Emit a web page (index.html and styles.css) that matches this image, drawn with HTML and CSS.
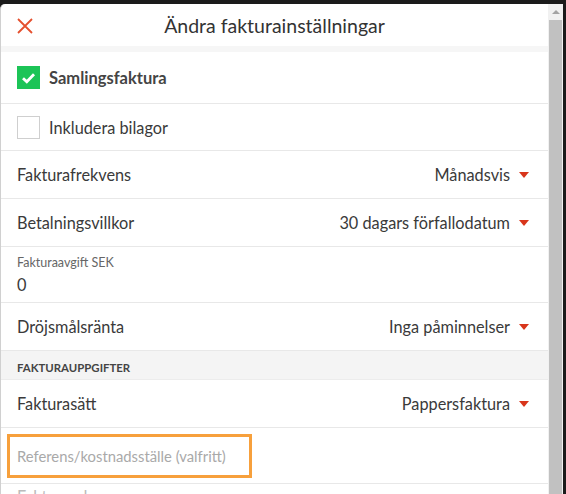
FILE: index.html
```html
<!DOCTYPE html>
<html>
  <head>
    <title>Ändra fakturainställningar</title>
    <link rel="stylesheet" href="styles.css">
  </head>
  <body>
    <div class="frame">
      <div class="modal">
        <div class="modal-header">
          <svg class="close-icon" width="18" height="18" viewBox="0 0 18 18">
            <path d="M2 2 L16 16 M16 2 L2 16" stroke="#e5502e" stroke-width="1.8" fill="none"/>
          </svg>
          <div class="modal-title">Ändra fakturainställningar</div>
        </div>
        <div class="band"></div>

        <div class="row check-row first">
          <span class="checkbox checked">
            <svg width="15" height="12" viewBox="0 0 15 12">
              <path d="M2 6.2 L5.8 9.8 L13 2.2" stroke="#fff" stroke-width="2.8" fill="none"/>
            </svg>
          </span>
          <span class="check-label bold">Samlingsfaktura</span>
        </div>
        <div class="row check-row">
          <span class="checkbox"></span>
          <span class="check-label">Inkludera bilagor</span>
        </div>

        <div class="row">
          <span class="label">Fakturafrekvens</span>
          <span class="select">Månadsvis<span class="caret"></span></span>
        </div>
        <div class="row">
          <span class="label">Betalningsvillkor</span>
          <span class="select">30 dagars förfallodatum<span class="caret"></span></span>
        </div>
        <div class="row field-row">
          <span class="small-label">Fakturaavgift SEK</span>
          <span class="field-value">0</span>
        </div>
        <div class="row">
          <span class="label">Dröjsmålsränta</span>
          <span class="select">Inga påminnelser<span class="caret"></span></span>
        </div>

        <div class="section-title">FAKTURAUPPGIFTER</div>

        <div class="row">
          <span class="label">Fakturasätt</span>
          <span class="select">Pappersfaktura<span class="caret"></span></span>
        </div>
        <div class="row input-row">
          <div class="text-input">Referens/kostnadsställe (valfritt)</div>
        </div>
        <div class="row last-row">
          <span class="label faded">Fakturaadress</span>
        </div>
      </div>
      <div class="scrollbar">
        <div class="scroll-arrow"></div>
        <div class="scroll-thumb"></div>
      </div>
    </div>
  </body>
</html>
```

FILE: styles.css
```css
body {
  margin: 0;
  background-color: #1b1b1b;
  font-family: Lato, "Open Sans", sans-serif;
  color: #3a3a3a;
  overflow: hidden;
}
.frame {
  display: flex;
  margin-top: 4px;
  margin-right: 3px;
  height: 490px;
  overflow: hidden;
}
.modal {
  flex: 1;
  background-color: #fff;
  border-left: 1px solid #d0d0d0;
  border-top-left-radius: 5px;
  overflow: hidden;
}
.modal-header {
  position: relative;
  height: 42px;
  display: flex;
  align-items: center;
  justify-content: center;
}
.close-icon {
  position: absolute;
  left: 15px;
  top: 13px;
}
.modal-title {
  font-size: 19.5px;
  color: #333;
}
.band {
  height: 6px;
  background-color: #f6f6f6;
}
.row {
  display: flex;
  align-items: center;
  justify-content: space-between;
  height: 47px;
  padding: 0 19px 0 16px;
  border-bottom: 1px solid #e8e8e8;
  font-size: 16.3px;
}
.check-row {
  justify-content: flex-start;
  height: 46px;
}
.check-row.first {
  height: 51px;
}
.checkbox {
  width: 21px;
  height: 21px;
  border: 1px solid #cfcfcf;
  margin-right: 9px;
  display: flex;
  align-items: center;
  justify-content: center;
}
.checkbox.checked {
  background-color: #1cc457;
  border-color: #1cc457;
}
.bold {
  font-weight: bold;
  color: #444;
  font-size: 16.5px;
}
.select {
  display: flex;
  align-items: center;
}
.caret {
  width: 0;
  height: 0;
  border-left: 5.5px solid transparent;
  border-right: 5.5px solid transparent;
  border-top: 6px solid #d8361b;
  margin-left: 9px;
}
.field-row {
  flex-direction: column;
  align-items: flex-start;
  justify-content: center;
  height: 55px;
}
.small-label {
  font-size: 12.5px;
  color: #666;
  margin-bottom: 5px;
}
.field-value {
  font-size: 16.3px;
}
.section-title {
  height: 29px;
  background-color: #f4f4f4;
  border-bottom: 1px solid #ececec;
  display: flex;
  align-items: center;
  padding: 4px 16px 0;
  box-sizing: border-box;
  font-size: 11.4px;
  font-weight: bold;
  color: #444;
}
.input-row {
  height: 55px;
  padding-left: 6px;
}
.text-input {
  width: 232px;
  height: 38px;
  border: 3px solid #f7a03c;
  display: flex;
  align-items: center;
  padding-left: 7px;
  color: #a9a9a9;
  font-size: 14.8px;
}
.last-row {
  border-bottom: none;
  align-items: flex-start;
  padding-top: 3px;
}
.faded {
  color: #bbb;
}
.scrollbar {
  width: 15px;
  background-color: #f1f1f1;
  display: flex;
  flex-direction: column;
  align-items: center;
}
.scroll-arrow {
  width: 0;
  height: 0;
  border-left: 4px solid transparent;
  border-right: 4px solid transparent;
  border-bottom: 4px solid #a3a3a3;
  margin: 6px 0 6px;
}
.scroll-thumb {
  width: 13px;
  flex: 1;
  background-color: #c1c1c1;
}
```
